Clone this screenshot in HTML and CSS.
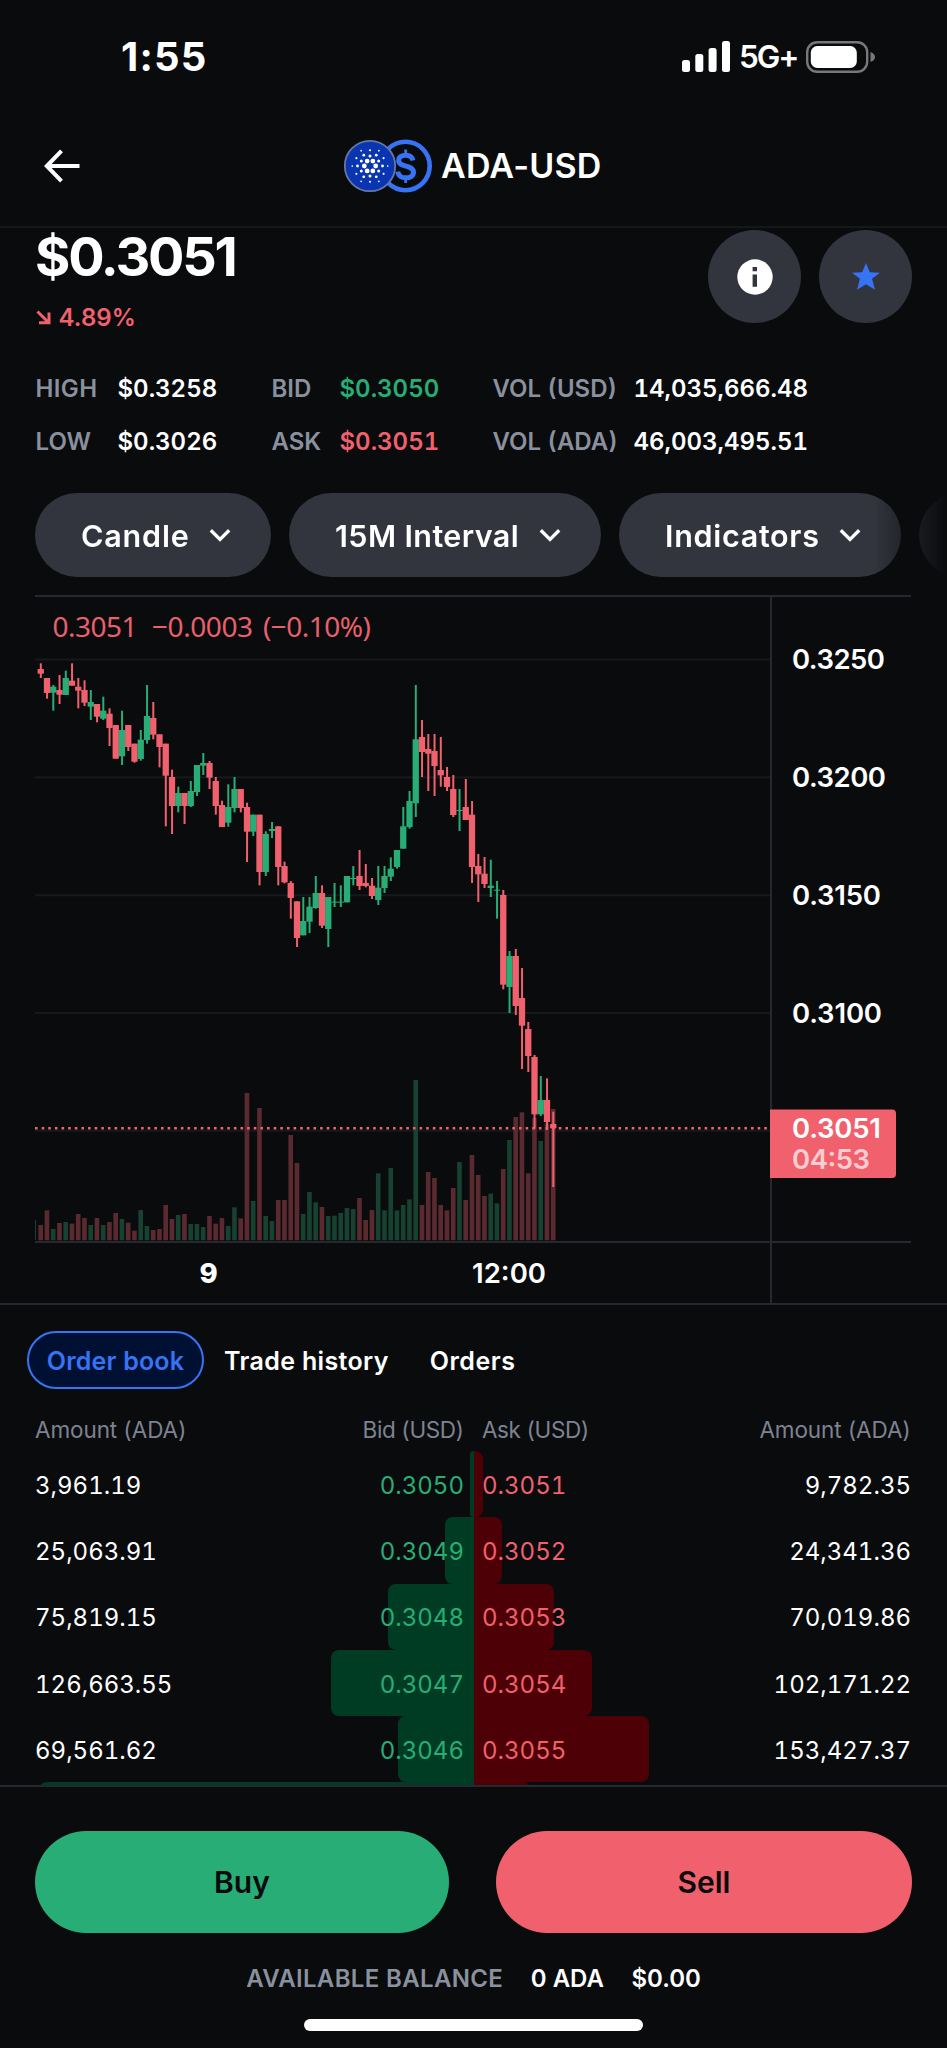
FILE: index.html
```html
<!DOCTYPE html>
<html lang="en">
<head>
<meta charset="utf-8">
<title>ADA-USD</title>
<link rel="stylesheet" href="styles.css">
</head>
<body>
<div class="screen">
  <div class="status">
    <span class="time">1:55</span>
    <div class="status-right">
      <svg class="signal" width="48" height="31" viewBox="0 0 48 31" fill="#fff">
        <rect x="0" y="19" width="8" height="12" rx="2.5"/><rect x="13.3" y="13" width="8" height="18" rx="2.5"/><rect x="26.6" y="7" width="8" height="24" rx="2.5"/><rect x="40" y="0" width="8" height="31" rx="2.5"/>
      </svg>
      <span class="network">5G+</span>
      <svg class="battery" width="70" height="32" viewBox="0 0 70 32">
        <rect x="1.2" y="1.2" width="60" height="29.6" rx="10" fill="none" stroke="#77787a" stroke-width="2.4"/>
        <rect x="4.8" y="5" width="46" height="22" rx="6.5" fill="#fff"/>
        <path d="M64.5 11c3 1 4.500 3 4.500 5s-1.500 4-4.500 5z" fill="#77787a"/>
      </svg>
    </div>
  </div>

  <header class="nav">
    <svg class="back" width="36" height="34" viewBox="0 0 36 34" fill="none" stroke="#fff" stroke-width="4"><path d="M35.500 17H3M17.500 1.800L2.800 17l14.700 15.200"/></svg>
    <div class="pair">
      <svg width="90" height="54" viewBox="0 0 90 54">
        <circle cx="62.500" cy="27" r="24.200" fill="none" stroke="#3773f5" stroke-width="4.600"/>
        <g fill="none" stroke="#3773f5" stroke-width="5"><path d="M70 21.500c-.8-3.700-3.300-5.300-7.300-5.300-4.100 0-7 1.900-7 5.300 0 7.600 14.800 3.800 14.800 11.700 0 3.600-3.200 5.600-7.600 5.600s-7.400-2-8.200-6.200"/><path d="M62.700 10.500v6M62.700 38v6" stroke-width="2.800"/></g>
        <circle cx="27" cy="27" r="25.200" fill="#0a35b0" stroke="#6676a8" stroke-width="1.800"/>
        <g id="dots" fill="#fff"></g>
      </svg>
      <span class="pair-name">ADA-USD</span>
    </div>
  </header>

  <section class="summary">
    <div>
      <div class="price">$0.3051</div>
      <div class="change"><svg width="15" height="15" viewBox="0 0 15 15" fill="none" stroke="#f0616d" stroke-width="3"><path d="M1.500 1.500l11 11M13 2.500V12.800H3"/></svg><span>4.89%</span></div>
    </div>
    <div class="actions">
      <div class="round"><svg width="36" height="36" viewBox="0 0 36 36"><circle cx="18" cy="18" r="17.700" fill="#fff"/><path d="M15.600 8H20v4.300h-4.400zM15.600 15.500H20V27.800h-4.400z" fill="#32353d"/></svg></div>
      <div class="round"><svg width="28" height="27" viewBox="0 0 28 27"><path d="M14 0L17.800 9.300 28 9.800 20 15.800 23 26.800 14 21.300 5 26.800 8 15.800 0 9.800 10.200 9.300z" fill="#3773f5"/></svg></div>
    </div>
  </section>

  <section class="stats">
    <span class="k high">HIGH</span><span class="v">$0.3258</span><span class="k">BID</span><span class="v green">$0.3050</span><span class="k vol">VOL (USD)</span><span class="v">14,035,666.48</span>
    <span class="k">LOW</span><span class="v">$0.3026</span><span class="k">ASK</span><span class="v red">$0.3051</span><span class="k vol">VOL (ADA)</span><span class="v">46,003,495.51</span>
  </section>

  <div class="pills">
    <div class="pill candle"><span>Candle</span><svg width="22" height="15" viewBox="0 0 22 15"><path d="M1.800 2.200L11 11.400l9.200-9.200"/></svg></div>
    <div class="pill interval"><span>15M Interval</span><svg width="22" height="15" viewBox="0 0 22 15"><path d="M1.800 2.200L11 11.400l9.200-9.200"/></svg></div>
    <div class="pill indicators"><span>Indicators</span><svg width="22" height="15" viewBox="0 0 22 15"><path d="M1.800 2.200L11 11.400l9.200-9.200"/></svg></div>
    <div class="pill next"></div>
  </div>

  <svg class="chart" width="947" height="710" viewBox="0 595 947 710">
    <g class="grid"><path d="M35 659.500H770M35 777.200H770M35 895.200H770M35 1013H770M35 1130.800H770"/></g>
    <g id="volume"></g>
    <path class="last" d="M35 1128.200H770"/>
    <g id="candles"></g>
    <g class="frame"><path d="M35 596H911M35 1242H911M771 597V1304M0 1304H947"/></g>
    <g class="legend"><text x="52.500" y="637" textLength="85">0.3051</text><text x="152" y="637" textLength="101">−0.0003</text><text x="263" y="637" textLength="108">(−0.10%)</text></g>
    <g class="ticks">
      <text x="792" y="669" textLength="93">0.3250</text>
      <text x="792" y="786.500" textLength="94">0.3200</text>
      <text x="792" y="904.500" textLength="89">0.3150</text>
      <text x="792" y="1022.500" textLength="90">0.3100</text>
      <text x="208.500" y="1283" text-anchor="middle" font-weight="800">9</text>
      <text x="472" y="1283" textLength="74">12:00</text>
    </g>
    <path d="M770 1109.500H892a4 4 0 0 1 4 4V1174a4 4 0 0 1-4 4H770z" fill="#f0616d"/>
    <g class="ticks"><text x="792" y="1138" textLength="89">0.3051</text><text class="count" x="792" y="1169" textLength="78">04:53</text></g>
  </svg>

  <section class="book">
    <div class="tabs"><span class="tab active">Order book</span><span class="tab trade">Trade history</span><span class="tab">Orders</span></div>
    <div class="row head"><span>Amount (ADA)</span><span class="bid">Bid (USD)</span><span class="ask">Ask (USD)</span><span class="end">Amount (ADA)</span></div>
    <div class="rows" id="rows"></div>
  </section>

  <footer class="footer">
    <div class="buttons"><div class="btn buy">Buy</div><div class="btn sell">Sell</div></div>
    <div class="balance"><span class="k">AVAILABLE BALANCE</span><span>0 ADA</span><span>$0.00</span></div>
    <div class="home"></div>
  </footer>
</div>
<script src="app.js"></script>
</body>
</html>
```

FILE: styles.css
```css
* { box-sizing: border-box; }
body { margin: 0; background: #0a0b0d; color: #fff; font-family: Inter, "Liberation Sans", sans-serif; }
svg { display: block; flex: none; }
.screen { width: 947px; height: 2048px; display: flex; flex-direction: column; overflow: hidden; }
.green { color: #27ad75; }
.red { color: #f0616d; }

.status { height: 112px; display: flex; justify-content: space-between; align-items: center; padding: 1px 71px 0 121px; }
.time { font-size: 40px; font-weight: 750; letter-spacing: 1.2px; }
.status-right { display: flex; align-items: center; }
.network { width: 59px; font-size: 31.500px; font-weight: 600; letter-spacing: -2.1px; margin: 0 8px 0 9px; }

.nav { height: 116px; display: flex; align-items: center; padding: 0 0 7px 44px; border-bottom: 2px solid #15171b; }
.pair { display: flex; align-items: center; margin-left: 263px; }
.pair-name { font-size: 34px; font-weight: 600; margin-left: 8px; letter-spacing: .2px; }

.summary { height: 133px; display: flex; justify-content: space-between; padding: 0 35px 0 36px; }
.price { height: 58px; margin-left: -1px; font-size: 54px; font-weight: 650; line-height: 58px; letter-spacing: -2.2px; }
.change { display: flex; align-items: center; gap: 7.500px; height: 30px; margin-top: 16px; color: #f0616d; font-size: 24px; font-weight: 600; letter-spacing: .1px; }
.actions { display: flex; gap: 18px; padding-top: 2px; }
.round { width: 93px; height: 93px; border-radius: 50%; background: #32353d; display: flex; align-items: center; justify-content: center; }

.stats { display: grid; grid-template-columns: 82px 154px 68px 153px 141px 200px; grid-auto-rows: 53.3px; align-items: center; padding: 1px 0 0 35.500px; height: 132px; font-size: 24px; font-weight: 600; font-variant-numeric: tabular-nums; white-space: nowrap; }
.k { color: #8a919e; }
.high { letter-spacing: .4px; }

.pills { height: 102px; display: flex; gap: 18px; padding-left: 35px; flex: none; -webkit-mask-image: linear-gradient(90deg, #000 875px, transparent 947px); mask-image: linear-gradient(90deg, #000 875px, transparent 947px); }
.pill { flex: none; height: 84px; border-radius: 42px; background: #32353d; display: flex; align-items: center; justify-content: space-between; padding: 0 40px 0 46px; font-size: 30.500px; font-weight: 600; }
.pill path { fill: none; stroke: #fff; stroke-width: 3.4; }
.candle { width: 236px; letter-spacing: .8px; }
.interval { width: 312px; letter-spacing: .4px; }
.indicators { width: 282px; letter-spacing: .7px; }
.next { width: 120px; }

.chart { font-family: Inter, sans-serif; }
.grid { stroke: #17191c; stroke-width: 2; fill: none; }
.frame { stroke: #26282f; stroke-width: 2; fill: none; }
.last { stroke: #f0616d; stroke-width: 2.4; stroke-dasharray: 2.6 4.03; fill: none; }
.legend { font-family: "Noto Sans", sans-serif; font-size: 28px; fill: #e8606c; }
.ticks { font-size: 27.5px; font-weight: 600; fill: #fff; }
.count { fill: #fbcdd1; }
.c-up { fill: #27ad75; }
.c-down { fill: #f0616d; }
.v-up { fill: #174130; }
.v-down { fill: #5b2a30; }

.book { height: 480px; flex: none; padding-top: 26px; overflow: hidden; }
.tabs { display: flex; align-items: center; height: 58px; padding-left: 27px; font-size: 25px; font-weight: 600; }
.tab { line-height: 32px; padding-top: 2px; letter-spacing: .5px; }
.tab.active { height: 58px; line-height: 54px; width: 177px; padding-top: 1px; text-align: center; border: 2px solid #3773f5; border-radius: 29px; color: #3773f5; background: #001033; letter-spacing: .2px; }
.trade { margin: 0 41px 0 20px; letter-spacing: .35px; }
.row { display: grid; grid-template-columns: 200px 229px 228px 219px; align-items: center; height: 66.3px; padding: 2px 36px 0 35px; font-size: 24px; font-variant-numeric: tabular-nums; }
.head { height: 62px; padding-top: 18px; color: #7d8391; font-size: 22.500px; letter-spacing: -.1px; }
.head .bid, .head .ask { letter-spacing: -.4px; }
.bid { text-align: right; }
.ask { padding-left: 18px; }
.end { text-align: right; }
.entry { display: grid; height: 66.3px; }
.entry > * { grid-area: 1 / 1; }
.depth { display: grid; grid-template-columns: 473.5px 473.5px; }
.depth i { height: 66.3px; }
.depth .b { justify-self: end; background: #003c24; border-radius: 8px 0 0 8px; }
.depth .a { background: #4d0006; border-radius: 0 8px 8px 0; }

.footer { height: 263px; flex: none; border-top: 2px solid #26282f; padding: 44px 35px 0 35px; }
.buttons { display: grid; grid-template-columns: 414px 416px; justify-content: space-between; }
.btn { height: 102px; border-radius: 51px; line-height: 102px; text-align: center; color: #0a0b0d; font-size: 30px; font-weight: 600; }
.buy { background: #27ad75; }
.sell { background: #f0616d; }
.balance { display: flex; justify-content: center; gap: 27.500px; margin-top: 31px; line-height: 30px; font-size: 24px; font-weight: 600; }
.balance .k { letter-spacing: .35px; }
.home { width: 339px; height: 12px; border-radius: 6px; background: #fff; margin: 25px auto 0; }
```

FILE: app.js
```js
const NS = "http://www.w3.org/2000/svg";
function add(parent, tag, attrs) {
  const el = document.createElementNS(NS, tag);
  for (const k in attrs) el.setAttribute(k, attrs[k]);
  parent.appendChild(el);
}

// Each candle: direction, high, body top, body bottom, low (thirds of a pixel below the panel's base)
const panels = [
  [590, `r 220 237 251 264|r 264 264 309 326|g 285 290 308 362|r 255 300 314 342|g 242 264 315 315|r 220 272 287 287|r 264 290 302 355|r 271 300 338 348|g 300 336 350 390|r 342 342 380 397|g 320 362 386 390|r 355 371 414 468|r 405 405 506 506|g 362 420 499 525|r 405 405 471 483|r 461 461 515 518|g 420 449 507 512|g 285 378 450 461|r 336 384 434 448|r 433 433 471 532|r 461 461 557 709|r 539 561 648 732|g 590 609 648 667|r 609 609 648 702|g 573 603 648 651|g 525 525 606 618|g 489 519 527 555|r 513 519 563 597|r 561 573 648 674|r 632 645 711 711|g 583 651 698 710|g 561 597 654 667|r 597 597 654 667|r 638 651 725 816|g 674 674 725 738|r 674 674 846 886|g 724 732 846 858|g 696 717 723 744|r 709 709 831 886|r 815 828 877 880`],
  [780, `r 303 309 354 416|r 364 364 474 501|g 351 423 466 466|g 351 380 425 459|g 288 339 384 386|r 316 339 437 444|g 351 351 447 501|g 309 365 367 381|g 316 365 367 381|g 288 288 367 367|g 258 294 297 316|r 210 288 318 330|r 252 309 318 322|r 294 317 348 357|g 258 323 360 375|g 258 288 324 339|g 232 266 290 303|g 210 210 261 266|g 81 139 206 206|g 33 63 141 146`],
  [640, `g 135 298 490 531|r 240 291 336 411|r 282 327 341 453|r 282 333 378 468|r 291 390 406 440|r 381 411 441 453|r 405 447 525 531|g 447 510 513 573|r 417 501 540 540|r 483 524 681 729|r 642 678 703 786|r 651 701 732 744|g 659 737 744 771|g 723 749 752 836`],
  [780, `r 330 345 614 628|g 513 528 621 699|r 507 528 678 705|r 564 654 737 867|r 726 747 828 876|r 825 831 1003 1046`],
  [1060, `g 48 120 163 168|r 55 120 186 210|r 155 192 205 381`]
];
const candles = panels.flatMap(([base, s]) => s.split("|").map(c => {
  const [d, ...v] = c.split(" ");
  return [d === "g" ? "up" : "down", ...v.map(n => base + n / 3)];
}));
const volumeTops = [495,451,507,489,486,491,462,474,495,474,495,486,459,477,488,512,450,498,510,507,435,477,465,462,492,492,501,468,491,474,498,442,475,99,423,144,468,483,420,420,225,309,462,396,427,441,468,467,459,444,447,414,480,450,340,451,324,451,435,418,60,435,336,354,435,451,384,306,420,285,345,408,401,430,327,240,171,157,340,174,243,190,147];

const volume = document.getElementById("volume");
const plot = document.getElementById("candles");
add(volume, "rect", { x: 35, y: 1220, width: 1, height: 20, class: "v-up" });
candles.forEach(([dir, hi, top, bottom, lo], i) => {
  const x = 40.8 + i * 6.25;
  const vt = 1060 + volumeTops[i] / 3;
  add(volume, "rect", { x: x - 2.4, y: vt, width: 4.6, height: 1240.3 - vt, class: "v-" + dir });
  add(plot, "rect", { x: x - 1, y: hi, width: 2, height: lo - hi, class: "c-" + dir });
  add(plot, "rect", { x: x - 3.2, y: top, width: 6.3, height: Math.max(bottom - top, 1), class: "c-" + dir });
});

// Cardano mark: rings of dots around the centre (radius, dot size, rotation)
const dots = document.getElementById("dots");
[[5.7, 2.4, 0], [10, 1.5, 30], [12.5, 1.4, 0], [15.7, 1.05, 30], [17.7, .85, 0]].forEach(([r, size, turn]) => {
  for (let k = 0; k < 6; k++) {
    const a = (turn + k * 60) * Math.PI / 180;
    add(dots, "circle", { cx: 27 + r * Math.cos(a), cy: 27 + r * Math.sin(a), r: size });
  }
});

const book = [
  ["3,961.19", "0.3050", "0.3051", "9,782.35", 4, 9.5],
  ["25,063.91", "0.3049", "0.3052", "24,341.36", 28.5, 28.5],
  ["75,819.15", "0.3048", "0.3053", "70,019.86", 86, 80.5],
  ["126,663.55", "0.3047", "0.3054", "102,171.22", 142.5, 118.5],
  ["69,561.62", "0.3046", "0.3055", "153,427.37", 76, 175.5],
  ["", "", "", "", 434.5, 57.5]
];
document.getElementById("rows").innerHTML = book.map(([ba, b, a, aa, bw, aw]) =>
  `<div class="entry"><div class="depth"><i class="b" style="width:${bw}px"></i><i class="a" style="width:${aw}px"></i></div>` +
  `<div class="row"><span>${ba}</span><span class="bid green">${b}</span><span class="ask red">${a}</span><span class="end">${aa}</span></div></div>`).join("");
```
